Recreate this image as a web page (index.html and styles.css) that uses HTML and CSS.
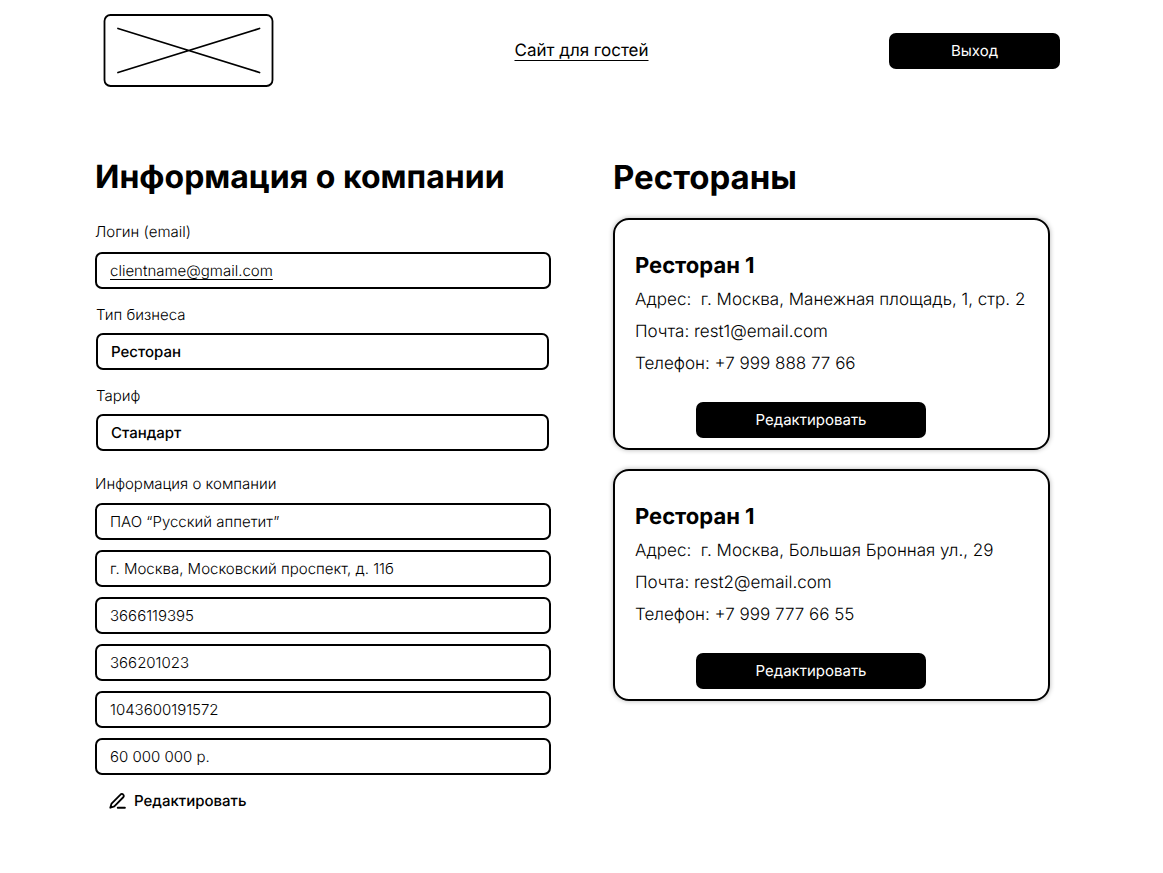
FILE: index.html
```html
<!DOCTYPE html>
<html lang="ru">
<head>
<meta charset="utf-8">
<meta name="viewport" content="width=device-width, initial-scale=1">
<title>Информация о компании</title>
<link rel="stylesheet" href="styles.css">
</head>
<body>
<header class="header">
  <svg class="logo" viewBox="0 0 170 73" role="img" aria-label="Логотип">
    <rect x="1" y="1" width="168" height="71" rx="6" fill="none" stroke="#000" stroke-width="1.8"/>
    <path d="M14.5 14.5 156 58.5M14.5 58.5 156 14.5" fill="none" stroke="#000" stroke-width="1.8" stroke-linecap="round"/>
  </svg>
  <a class="guest-link" href="#">Сайт для гостей</a>
  <button class="button header-button" type="button">Выход</button>
</header>
<main class="main">
  <form class="company">
    <h1 class="heading">Информация о компании</h1>
    <div class="field">
      <label class="label" for="login">Логин (email)</label>
      <input class="input input-link" id="login" type="email" value="clientname@gmail.com">
    </div>
    <div class="field field-inset">
      <label class="label" for="business">Тип бизнеса</label>
      <input class="input input-strong" id="business" type="text" value="Ресторан">
    </div>
    <div class="field field-inset">
      <label class="label" for="tariff">Тариф</label>
      <input class="input input-strong" id="tariff" type="text" value="Стандарт">
    </div>
    <div class="details">
      <label class="label" for="name">Информация о компании</label>
      <div class="details-list">
        <input class="input" id="name" type="text" value="ПАО “Русский аппетит”">
        <input class="input" type="text" aria-label="Адрес" value="г. Москва, Московский проспект, д. 11б">
        <input class="input" type="text" aria-label="ИНН" value="3666119395">
        <input class="input" type="text" aria-label="КПП" value="366201023">
        <input class="input" type="text" aria-label="ОГРН" value="1043600191572">
        <input class="input" type="text" aria-label="Уставный капитал" value="60 000 000 р.">
      </div>
    </div>
    <button class="edit" type="button">
      <svg class="edit-icon" viewBox="0 0 16 16" aria-hidden="true">
        <path d="M1.2 13.9 2.4 9.9 10.8 1.5a1.7 1.7 0 0 1 2.6 0 1.7 1.7 0 0 1 0 2.5L5 12.5ZM8.2 13.9H15" fill="none" stroke="#000" stroke-width="1.7" stroke-linecap="round" stroke-linejoin="round"/>
      </svg>
      Редактировать
    </button>
  </form>
  <section class="restaurants">
    <h2 class="heading">Рестораны</h2>
    <div class="cards">
      <article class="card">
        <h3 class="card-title">Ресторан 1</h3>
        <p class="card-line">Адрес:&nbsp; г. Москва, Манежная площадь, 1, стр. 2</p>
        <p class="card-line">Почта: rest1@email.com</p>
        <p class="card-line">Телефон: +7 999 888 77 66</p>
        <div class="card-actions"><button class="button card-button" type="button">Редактировать</button></div>
      </article>
      <article class="card">
        <h3 class="card-title">Ресторан 1</h3>
        <p class="card-line">Адрес:&nbsp; г. Москва, Большая Бронная ул., 29</p>
        <p class="card-line">Почта: rest2@email.com</p>
        <p class="card-line">Телефон: +7 999 777 66 55</p>
        <div class="card-actions"><button class="button card-button" type="button">Редактировать</button></div>
      </article>
    </div>
  </section>
</main>
</body>
</html>
```
FILE: styles.css
```css
* { box-sizing: border-box; }

body {
  margin: 0;
  background: #fff;
  color: #000;
  font-family: Inter, "Liberation Sans", sans-serif;
  font-size: 15px;
  font-weight: 300;
  line-height: 20px;
  text-rendering: geometricPrecision;
}

h1, h2, h3, p { margin: 0; }

button, input { font: inherit; color: inherit; text-rendering: inherit; }

.header {
  display: grid;
  grid-template-columns: 1fr auto 1fr;
  align-items: center;
  padding: 14px 103px 0;
}

.logo { width: 171px; height: 73px; }

.guest-link {
  color: #000;
  font-size: 17px;
  font-weight: 400;
  text-underline-offset: 4px;
  text-decoration-thickness: 1px;
}

.button {
  height: 36px;
  padding: 0;
  border: 0;
  border-radius: 7px;
  background: #000;
  color: #fff;
  font-weight: 400;
}

.header-button { width: 171px; justify-self: end; }

.main {
  display: grid;
  grid-template-columns: 456fr 437fr;
  gap: 62px;
  align-items: start;
  padding: 70px 113px 40px 95px;
}

.heading {
  margin-bottom: 21px;
  font-size: 33px;
  line-height: 40px;
  font-weight: 700;
}

.company .heading { margin-bottom: 25px; font-size: 32px; }

.field, .details { display: flex; flex-direction: column; }

.field { gap: 10px; margin-bottom: 16px; }

.field-inset { gap: 8px; padding: 0 2px 0 1px; }

.input {
  width: 100%;
  height: 37px;
  padding: 0 13px;
  border: 2px solid #000;
  border-radius: 7px;
  background: #fff;
}

.input-link {
  text-decoration: underline;
  text-underline-offset: 3px;
  text-decoration-thickness: 1px;
}

.input-strong { font-weight: 500; }

.details { gap: 9px; margin-top: 23px; }

.details-list { display: grid; gap: 10px; }

.edit {
  display: flex;
  align-items: center;
  gap: 8px;
  margin-top: 16px;
  padding: 0 14px;
  border: 0;
  background: none;
  font-weight: 500;
}

.edit-icon { width: 17px; height: 17px; }

.cards { display: grid; gap: 19px; }

.card {
  padding: 30px 16px 10px 20px;
  border: 2px solid #000;
  border-radius: 16px;
  box-shadow: 0 0 5px rgba(0, 0, 0, 0.3);
}

.card-title {
  margin-bottom: 2px;
  font-size: 22px;
  line-height: 32px;
  font-weight: 700;
}

.card-line { font-size: 17px; line-height: 32px; }

.card-actions {
  display: flex;
  justify-content: center;
  margin-top: 22px;
  padding-right: 45px;
}

.card-button { width: 230px; }
```
